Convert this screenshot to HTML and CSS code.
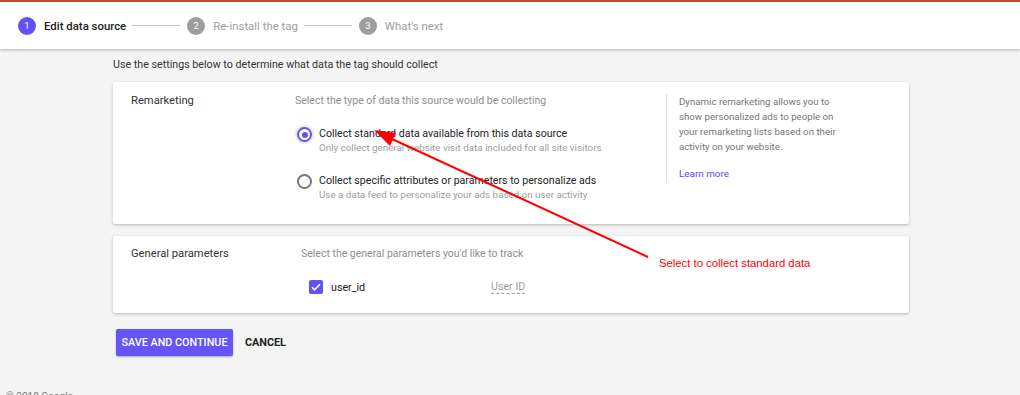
FILE: index.html
```html
<!DOCTYPE html>
<html>
<head>
<meta charset="utf-8">
<link rel="stylesheet" href="styles.css">
</head>
<body>
<header class="topbar">
  <div class="step active"><span class="num">1</span><span class="step-label">Edit data source</span></div>
  <span class="step-line"></span>
  <div class="step"><span class="num">2</span><span class="step-label">Re-install the tag</span></div>
  <span class="step-line"></span>
  <div class="step"><span class="num">3</span><span class="step-label">What's next</span></div>
</header>

<main class="content">
  <p class="intro">Use the settings below to determine what data the tag should collect</p>

  <section class="card card-remarketing">
    <div class="card-title">Remarketing</div>
    <div class="options">
      <div class="section-hint">Select the type of data this source would be collecting</div>
      <div class="option">
        <span class="radio checked"></span>
        <div>
          <div class="option-label">Collect standard data available from this data source</div>
          <div class="option-sub">Only collect general website visit data included for all site visitors</div>
        </div>
      </div>
      <div class="option">
        <span class="radio"></span>
        <div>
          <div class="option-label">Collect specific attributes or parameters to personalize ads</div>
          <div class="option-sub">Use a data feed to personalize your ads based on user activity</div>
        </div>
      </div>
    </div>
    <aside class="side-info">
      <p>Dynamic remarketing allows you to show personalized ads to people on your remarketing lists based on their activity on your website.</p>
      <a class="learn-more">Learn more</a>
    </aside>
  </section>

  <section class="card card-params">
    <div class="card-title">General parameters</div>
    <div class="params">
      <div class="section-hint">Select the general parameters you'd like to track</div>
      <div class="param-row">
        <span class="checkbox">
          <svg width="14" height="14" viewBox="0 0 14 14"><path d="M3 7.2l2.6 2.6L11 4.3" fill="none" stroke="#fff" stroke-width="1.6"/></svg>
        </span>
        <span class="param-name">user_id</span>
        <span class="param-alias">User ID</span>
      </div>
    </div>
  </section>

  <div class="actions">
    <button class="btn-primary">SAVE AND CONTINUE</button>
    <button class="btn-text">CANCEL</button>
  </div>
</main>

<footer class="footer">© 2018 Google</footer>

<svg class="annotation-arrow" width="1020" height="395" viewBox="0 0 1020 395">
  <line x1="648" y1="257" x2="392" y2="139" stroke="#ff0000" stroke-width="2"/>
  <polygon points="374,130 396,133 390,146" fill="#ff0000"/>
</svg>
<div class="annotation-text">Select to collect standard data</div>
</body>
</html>
```

FILE: styles.css
```css
* { box-sizing: border-box; }

body {
  margin: 0;
  background: #f4f4f4;
  font-family: Roboto, "Noto Sans", Arial, sans-serif;
  color: #212121;
  width: 1020px;
  height: 395px;
  overflow: hidden;
  position: relative;
}

.topbar {
  height: 49px;
  background: #fff;
  border-top: 2px solid #b4502f;
  box-shadow: 0 1px 3px rgba(0,0,0,0.28);
  display: flex;
  align-items: center;
  padding-left: 18px;
  position: relative;
  z-index: 1;
}

.step {
  display: flex;
  align-items: center;
  gap: 8px;
  font-size: 11.4px;
  color: #9e9e9e;
}

.step .num {
  width: 18px;
  height: 18px;
  border-radius: 50%;
  background: #9e9e9e;
  color: #fff;
  font-size: 9.5px;
  display: flex;
  align-items: center;
  justify-content: center;
}

.step.active { color: #212121; font-weight: 500; }
.step.active .num { background: #6252f5; font-weight: 400; }

.step-line {
  width: 48px;
  height: 1px;
  background: #c8c8c8;
  margin: 0 7px 0 6px;
}

.content {
  padding-left: 113px;
}

.intro {
  margin: 0;
  padding-top: 9px;
  height: 33px;
  font-size: 10.7px;
  line-height: 13px;
  color: #333;
}

.card {
  width: 796px;
  background: #fff;
  box-shadow: 0 1px 3px rgba(0,0,0,0.25);
  border-radius: 2px;
  display: flex;
}

.card-title {
  font-size: 11.2px;
  line-height: 14px;
  color: #333;
  padding-left: 18px;
}

.card-remarketing {
  height: 142px;
  padding-top: 12px;
}

.card-remarketing .card-title { width: 182px; }

.options { width: 371px; }

.section-hint {
  font-size: 10.5px;
  line-height: 14px;
  color: #8f8f8f;
}

.option {
  display: flex;
  gap: 7px;
  margin-top: 19px;
}

.radio {
  width: 15px;
  height: 15px;
  border: 2px solid #757575;
  border-radius: 50%;
  margin-left: 2px;
  flex: none;
  position: relative;
}

.radio.checked {
  border-color: #6252f5;
  box-shadow: 0 0 0 2px rgba(98,82,245,0.15);
}

.radio.checked::after {
  content: "";
  position: absolute;
  left: 2.5px;
  top: 2.5px;
  width: 6px;
  height: 6px;
  border-radius: 50%;
  background: #6252f5;
}

.option-label {
  font-size: 10.6px;
  line-height: 14px;
  color: #222;
}

.option-sub {
  font-size: 9.8px;
  line-height: 14px;
  color: #9e9e9e;
}

.side-info {
  border-left: 1px solid #e0e0e0;
  padding-left: 12px;
  height: 88px;
}

.side-info p {
  margin: 0;
  width: 165px;
  font-size: 9.7px;
  line-height: 15px;
  color: #757575;
}

.learn-more {
  display: block;
  margin-top: 12px;
  font-size: 9.9px;
  line-height: 15px;
  color: #6a3ef0;
}

.card-params {
  margin-top: 12px;
  height: 77px;
  padding-top: 11px;
}

.card-params .card-title { width: 188px; }

.param-row {
  display: flex;
  align-items: center;
  margin-top: 19px;
  padding-left: 8px;
  height: 14px;
}

.checkbox {
  width: 14px;
  height: 14px;
  background: #6252f5;
  border-radius: 2px;
  display: flex;
  flex: none;
}

.param-name {
  margin-left: 8px;
  width: 160px;
  font-size: 10.7px;
  color: #222;
}

.param-alias {
  font-size: 10.7px;
  color: #9e9e9e;
  border-bottom: 1px dashed #9e9e9e;
  line-height: 12px;
}

.actions {
  display: flex;
  align-items: center;
  gap: 12px;
  margin-top: 16px;
  padding-left: 3px;
}

.btn-primary {
  width: 117px;
  height: 27px;
  border: none;
  border-radius: 2px;
  background: #6554f7;
  color: #fff;
  font-family: Roboto, Arial, sans-serif;
  font-size: 10.8px;
  font-weight: 500;
  padding: 0;
  box-shadow: 0 1px 2px rgba(0,0,0,0.3);
}

.btn-text {
  border: none;
  background: none;
  font-family: Roboto, Arial, sans-serif;
  font-size: 10.8px;
  font-weight: 700;
  color: #222;
  padding: 0;
}

.footer {
  margin-top: 35px;
  padding-left: 6px;
  font-size: 10px;
  color: #777;
}

.annotation-arrow {
  position: absolute;
  left: 0;
  top: 0;
  pointer-events: none;
  z-index: 2;
}

.annotation-text {
  position: absolute;
  left: 659px;
  top: 256px;
  font-family: "Liberation Sans", Arial, sans-serif;
  font-size: 11.3px;
  line-height: 14px;
  color: #ff0000;
  z-index: 2;
}
```
